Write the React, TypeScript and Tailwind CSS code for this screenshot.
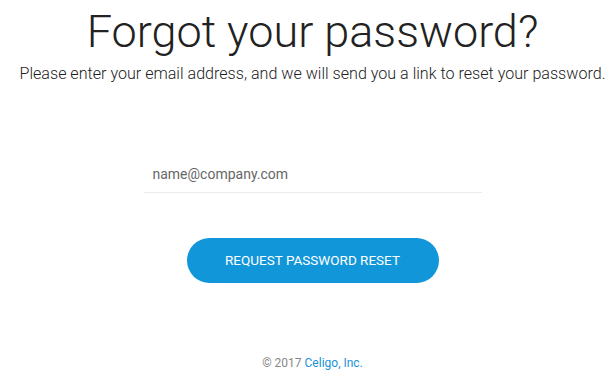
import React from 'react';

const App: React.FC = () => {
  return (
    <div className="w-[615px] h-[375px] bg-white flex flex-col items-center pl-[10px] font-['Roboto',sans-serif] overflow-hidden">
      <h1 className="mt-[6px] text-[45px] leading-[52px] font-light text-[#222]">Forgot your password?</h1>
      <p className="mt-[6px] text-[16.1px] leading-[20px] font-light text-[#222] whitespace-nowrap">
        Please enter your email address, and we will send you a link to reset your password.
      </p>
      <div className="mt-[78px] w-[338px] border-b border-[#ebebeb] pb-[6px]">
        <input
          type="email"
          placeholder="name@company.com"
          className="w-full px-[9px] text-[14px] leading-[20px] text-[#333] placeholder:text-[#666] outline-none bg-transparent"
        />
      </div>
      <button className="mt-[45px] w-[252px] h-[45px] rounded-full bg-[#1296da] text-white text-[13.5px] font-normal uppercase">
        Request password reset
      </button>
      <footer className="mt-[72px] text-[12px] leading-[16px] text-[#888]">
        © 2017 <a className="text-[#1a93d6]">Celigo, Inc.</a>
      </footer>
    </div>
  );
};

export default App;
